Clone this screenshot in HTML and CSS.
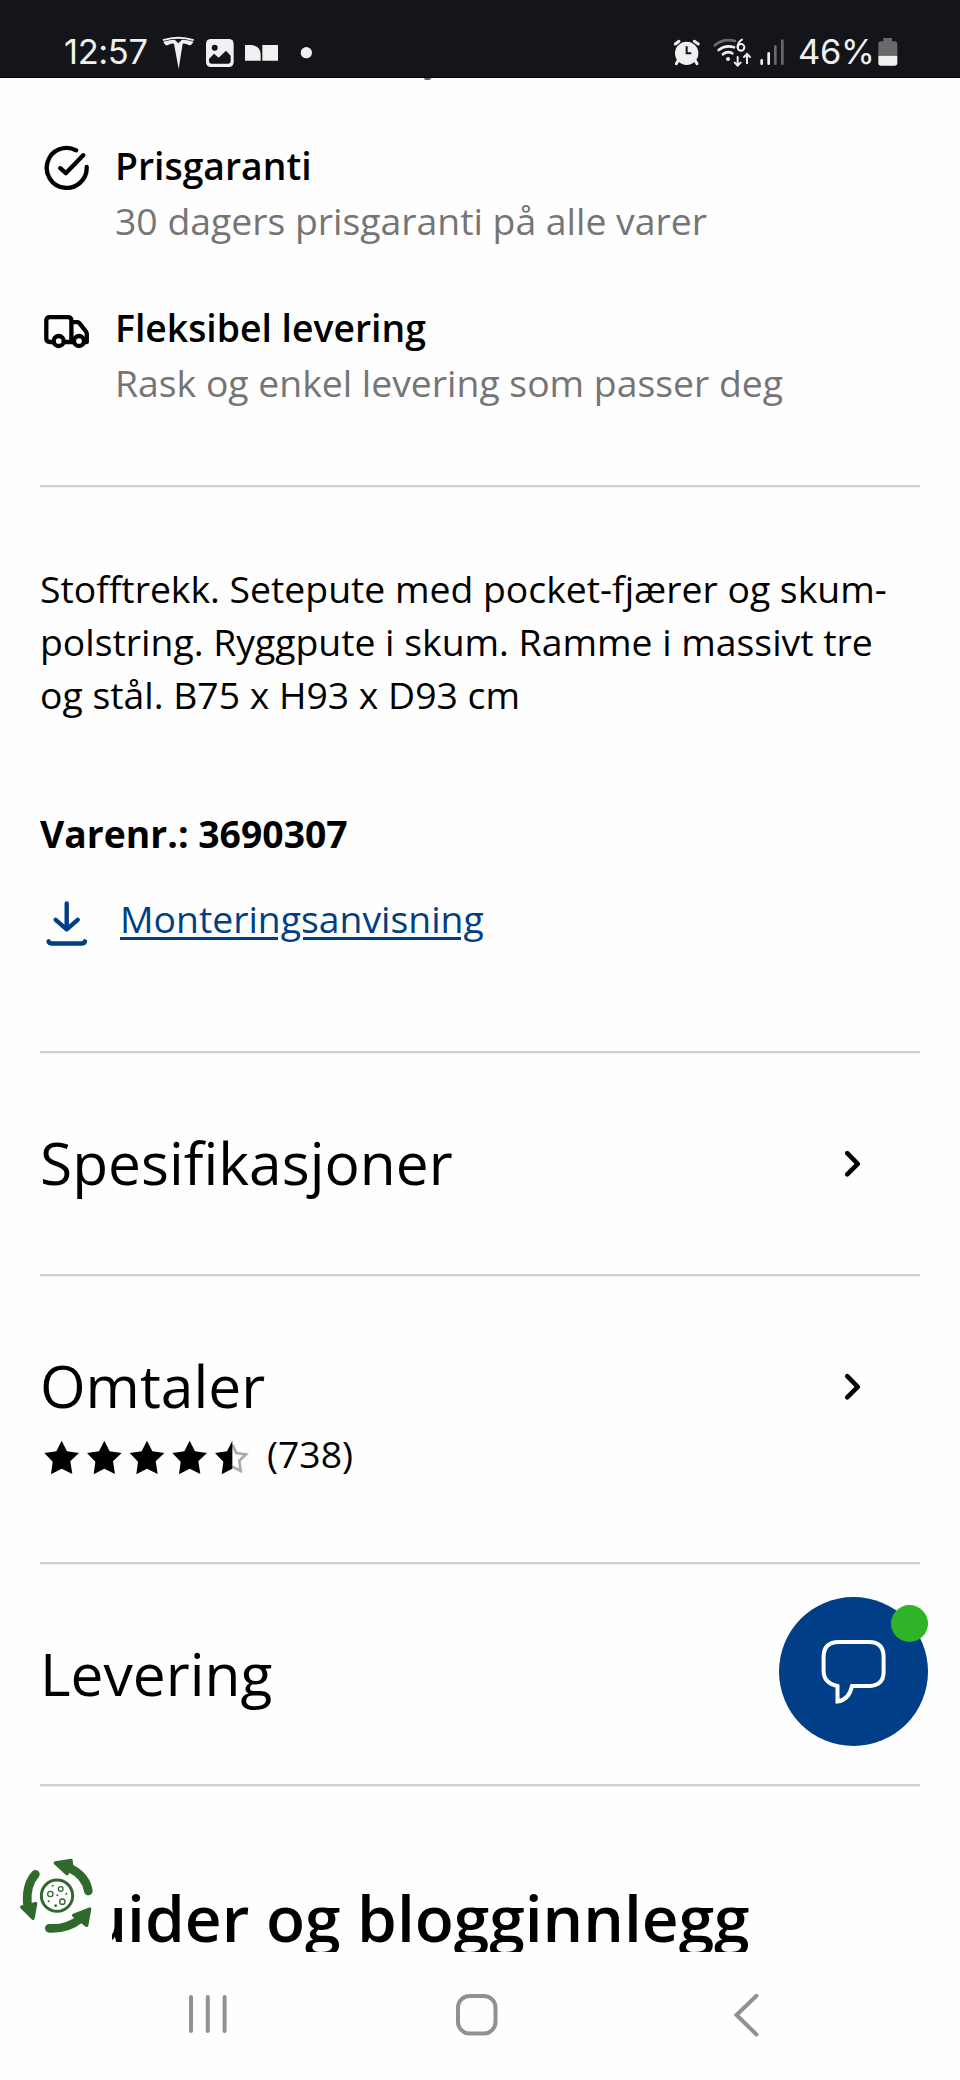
FILE: index.html
```html
<!DOCTYPE html>
<html lang="no">
<head>
<meta charset="utf-8">
<title>Produkt</title>
<link rel="stylesheet" href="styles.css">
</head>
<body>
<div class="phone">
  <header class="status">
    <span class="clock">12:57</span>
    <svg class="status-left" width="154" height="36" viewBox="480 102 462 108" fill="#f0f0f0">
      <path d="M488 118Q535 103 582 118L580 123Q535 109 490 123Z"/>
      <path d="M490 125Q510 119 524 119L535 130L546 119Q562 119 580 125Q576 136 567 136Q559 130 548 131L536 207L522 131Q511 130 503 136Q494 136 490 125Z"/>
      <rect x="618" y="117" width="83" height="84" rx="14"/>
      <circle cx="644" cy="143" r="9" fill="#13151b"/>
      <path d="M627 177L642 161L656 173L678 152L692 167V184Q692 191 685 191H634Q627 191 627 184Z" fill="#13151b"/>
      <path d="M735 135H754Q781 137 782 163V182H735ZM787 135H834V182H787Z"/>
      <circle cx="919" cy="158" r="17"/>
    </svg>
    <svg class="status-right" width="114" height="36" viewBox="576 102 342 108" fill="none" stroke="#f0f0f0" stroke-linecap="round">
      <circle cx="620" cy="160" r="35" fill="#f0f0f0" stroke="none"/>
      <path d="M586 132L597 124M643 124L655 132M593 184L589 191M647 184L651 191" stroke-width="9"/>
      <path d="M620 139V160H634" stroke="#13151b" stroke-width="6" stroke-linecap="butt"/>
      <path d="M704 136Q732 114 765 123" stroke="#67696d" stroke-width="8"/>
      <path d="M716 150Q737 133 762 142M729 163Q742 152 757 160" stroke-width="8"/>
      <circle cx="744" cy="177" r="6" fill="#f0f0f0" stroke="none"/>
      <path d="M786 119Q773 126 773 142" stroke-width="6"/>
      <circle cx="783" cy="142" r="10" stroke-width="6"/>
      <path d="M773 171V196M764 188L773 197L782 188M801 190V163M792 171L801 162L810 171" stroke-width="6"/>
      <path d="M845 181V191M866 160V191" stroke-width="8"/>
      <path d="M886 140V191M907 122V191" stroke="#67696d" stroke-width="8"/>
    </svg>
    <span class="charge">46%</span>
    <svg class="battery" width="20" height="28" viewBox="0 0 60 84">
      <path d="M16 0H42V10H50Q58 10 58 18V53H1V18Q1 10 9 10H16Z" fill="#67696d"/>
      <path d="M1 53H58V75Q58 83 50 83H9Q1 83 1 75Z" fill="#f0f0f0"/>
    </svg>
  </header>

  <main class="page">
    <div class="scrolled-edge"></div>
    <section class="perks">
      <div class="perk">
        <svg class="perk-icon" width="48" height="48" viewBox="0 0 48 48"><path d="M33.2 6.3A20 20 0 1 0 43.7 23M17.3 24.2L22.8 29.2L40.2 11.3"/></svg>
        <div><h3>Prisgaranti</h3><p>30 dagers prisgaranti på alle varer</p></div>
      </div>
      <div class="perk">
        <svg class="perk-icon" width="48" height="48" viewBox="0 0 48 48"><path d="M10.5 30H7Q3.3 30 3.3 26.5V8.8Q3.3 5.2 7 5.2H24.8Q28.4 5.2 28.4 8.8V30H21M28.4 10.2H34.5Q35.6 10.2 36.4 11.2L43 19.5Q43.8 20.5 43.8 22V30H41M28.4 30H31"/><circle cx="15.7" cy="29" r="5"/><circle cx="36" cy="29" r="5"/></svg>
        <div><h3>Fleksibel levering</h3><p>Rask og enkel levering som passer deg</p></div>
      </div>
    </section>

    <section class="about">
      <p>Stofftrekk. Setepute med pocket-fjærer og skum-<br>polstring. Ryggpute i skum. Ramme i massivt tre<br>og stål. B75 x H93 x D93 cm</p>
      <p class="item-no">Varenr.: 3690307</p>
      <div class="manual">
        <svg width="48" height="50" viewBox="0 0 48 50"><path d="M23.7 5.5V31M12.7 21.8L23.7 31.3L34.7 21.8M5.5 43.3Q6 45.5 9 45.5H38.5Q41.5 45.5 42 43.3"/></svg>
        <a>Monteringsanvisning</a>
      </div>
    </section>

    <section class="row">
      <h2>Spesifikasjoner</h2>
      <svg class="chevron" width="24" height="32" viewBox="0 0 24 32"><path d="M6.2 5.2L16.8 15.8L6.2 26.4"/></svg>
    </section>
    <section class="row reviews">
      <div>
        <h2>Omtaler</h2>
        <div class="rating">
          <svg width="208" height="36" viewBox="0 0 624 108">
            <defs><path id="star" d="M53 2L69 34L105 39L79 64L85 102L53 86L21 103L26 65L1 39L37 34Z" stroke-linejoin="round"/></defs>
            <use href="#star"/><use href="#star" x="128"/><use href="#star" x="256"/><use href="#star" x="384"/>
            <path d="M565 14L577 39L606 43L586 62L590 93L565 80" fill="none" stroke="#aaa" stroke-width="8"/>
            <path d="M565 2V86L533 103L538 65L513 39L549 34Z"/>
          </svg>
          <span>(738)</span>
        </div>
      </div>
      <svg class="chevron" width="24" height="32" viewBox="0 0 24 32"><path d="M6.2 5.2L16.8 15.8L6.2 26.4"/></svg>
    </section>
    <section class="row"><h2>Levering</h2></section>
    <section class="guides"><h1>Guider og blogginnlegg</h1></section>
  </main>

  <nav class="navbar">
    <svg width="42" height="44" viewBox="0 0 42 44"><path d="M4 4V38M20.8 4V38M37.6 4V38"/></svg>
    <svg width="44" height="44" viewBox="0 0 44 44"><rect x="3" y="3" width="37.5" height="37.5" rx="11.5"/></svg>
    <svg width="30" height="44" viewBox="0 0 30 44"><path d="M24.5 2.8L4.5 22L24.5 41.5"/></svg>
  </nav>

  <div class="cookie">
    <svg width="80" height="82" viewBox="50 105 240 246" fill="#2f6a2c" stroke="#2f6a2c" stroke-linejoin="round" stroke-linecap="round">
      <path d="M105 163Q77 194 81 250M210 145Q257 168 264 213M147 325Q201 328 239 297" fill="none" stroke-width="26"/>
      <path d="M165 129L212 121L214 137L200 161ZM64 261L106 251L98 295ZM220 286L268 267L259 316Z" stroke-width="10"/>
      <circle cx="170" cy="227" r="47" fill="none" stroke-width="9"/>
      <g fill="none" stroke-width="4"><circle cx="181" cy="207" r="7"/><circle cx="150" cy="222" r="8"/><circle cx="186" cy="245" r="8"/></g>
      <g stroke="none"><circle cx="157" cy="197" r="3"/><circle cx="198" cy="221" r="3"/><circle cx="171" cy="226" r="3"/><circle cx="145" cy="244" r="3"/><circle cx="166" cy="257" r="4"/></g>
    </svg>
  </div>

  <div class="chat">
    <svg width="150" height="150" viewBox="0 0 150 150"><path d="M58.5 89V104.5Q70 103 73 89H91Q104.6 88 104.6 75V60Q104.6 45 90 45H60Q44.6 45 44.6 60V74Q44.6 86 58.5 89Z"/></svg>
    <span class="online"></span>
  </div>
</div>
</body>
</html>
```
FILE: styles.css
```css
* { box-sizing: border-box; }
body { margin: 0; background: #fefefe; }
h1, h2, h3, p { margin: 0; }
svg { display: block; flex: none; }

.phone {
  position: relative;
  width: 960px;
  height: 2080px;
  display: flex;
  flex-direction: column;
  overflow: hidden;
  background: #fefefe;
  color: #000;
  font: 400 37.33px/53.33px "Open Sans", sans-serif;
}

.status {
  flex: none;
  height: 78px;
  display: flex;
  align-items: flex-start;
  padding: 34px 62px 0 64px;
  background: #13151b;
  border-bottom: 1px solid #000;
  color: #f0f0f0;
  font: 400 34.5px/36px Inter, sans-serif;
}
.clock { width: 96px; letter-spacing: -0.4px; white-space: nowrap; }
.status-right { margin-left: 358px; }
.charge { width: 80px; margin-left: 12px; letter-spacing: -0.3px; }
.battery { margin: 4px 0 0 0; }

.page { flex: 1; min-height: 0; padding: 0 40px; overflow: hidden; }
.scrolled-edge {
  width: 7px;
  height: 2px;
  margin-left: 384px;
  background: #666;
  border-radius: 0 0 3px 3px;
}

.perks, .about, .row { border-bottom: 2px solid #d0d0d0; box-shadow: 0 1px #f0f0f0; }

.perks {
  display: flex;
  flex-direction: column;
  gap: 53px;
  height: 407px;
  padding-top: 59px;
}
.perk { display: flex; gap: 24px; padding-left: 3px; }
.perk-icon { margin-top: 5px; }
.perk:nth-child(2) .perk-icon { margin-top: 11px; }
.perk-icon path, .perk-icon circle {
  fill: none;
  stroke: #000;
  stroke-width: 4.3;
  stroke-linecap: round;
  stroke-linejoin: round;
}
.perk h3 { font-size: 37.33px; font-weight: 600; height: 55.3px; }
.perk p { color: #757575; }
.perk p, .perk h3 { white-space: nowrap; }

.about { height: 566px; padding-top: 74.5px; white-space: nowrap; }
.item-no { margin-top: 86px; font-weight: 700; }
.manual { display: flex; gap: 29px; margin-top: 31.5px; padding-left: 3px; color: #003e85; }
.manual svg { margin-top: 6px; }
.manual path {
  fill: none;
  stroke: #003e85;
  stroke-width: 4.4;
  stroke-linecap: round;
  stroke-linejoin: round;
}
.manual a { text-decoration: underline; text-decoration-thickness: 3px; text-underline-offset: 4px; }

.row {
  display: flex;
  justify-content: space-between;
  height: 222.5px;
  padding: 69px 55px 0 0;
}
.row h2 { font-size: 58.67px; font-weight: 400; line-height: 80px; }
.chevron { margin-top: 26px; }
.chevron path {
  fill: none;
  stroke: #000;
  stroke-width: 4.6;
  stroke-linecap: round;
  stroke-linejoin: round;
}
.reviews { height: 288px; }
.rating { display: flex; gap: 15px; padding-left: 4px; margin-top: 2px; }
.rating svg { margin-top: 13px; }

.guides { padding-top: 88px; }
.guides h1 { font-size: 64px; font-weight: 600; line-height: 88px; white-space: nowrap; }

.navbar {
  flex: none;
  height: 128px;
  display: flex;
  align-items: flex-start;
  padding: 41px 0 0 187px;
  background: #fefefe;
}
.navbar svg { fill: none; stroke: #919191; stroke-width: 4; stroke-linecap: round; }
.navbar svg:nth-child(2) { margin-left: 226px; }
.navbar svg:nth-child(3) { margin-left: 233px; }

/* Floating widgets over the page */
.cookie {
  position: absolute;
  left: 0;
  top: 1840px;
  width: 112px;
  height: 112px;
  padding: 15px 0 0 16.7px;
  background: #fefefe;
}
.chat {
  position: absolute;
  left: 778.7px;
  top: 1597px;
  width: 149.3px;
  height: 149.3px;
  border-radius: 50%;
  background: #003e87;
}
.chat path { fill: none; stroke: #fff; stroke-width: 4; }
.online {
  position: absolute;
  right: 0;
  top: 8px;
  width: 37.3px;
  height: 37.3px;
  border-radius: 50%;
  background: #30b427;
}
```
